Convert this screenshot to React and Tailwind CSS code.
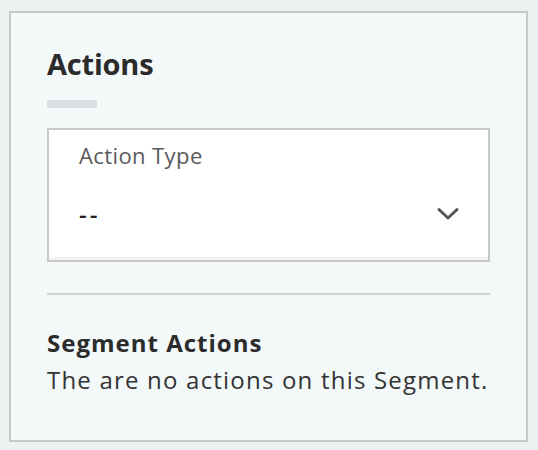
import React from 'react';

const font = { fontFamily: '"Open Sans", "Liberation Sans", sans-serif' };

const Chevron = () => (
  <svg width="22" height="14" viewBox="0 0 22 14" fill="none">
    <path d="M2 2.5 L11 11 L20 2.5" stroke="#555" strokeWidth="3" strokeLinecap="round" strokeLinejoin="round" />
  </svg>
);

export default function App() {
  return (
    <div className="h-[450px] w-[538px] bg-[#eef1f2] pt-[11px] pl-[9px]" style={font}>
      <div className="w-[519px] h-[431px] border-2 border-[#c6c8c9] bg-[#f3f8f9] px-[36px] pt-[36px]">
        {/* heading */}
        <h2 className="text-[29px] leading-none font-bold text-[#2b2b2b] tracking-[-0.2px]">Actions</h2>
        <div className="mt-[22px] h-[8px] w-[50px] bg-[#d9e0e2]"></div>

        {/* select */}
        <div className="mt-[20px] h-[134px] border-2 border-[#c8c8c8] bg-white pl-[30px] pr-[29px] pt-[14px] shadow-[inset_0_-3px_0_#f1f3f4]">
          <div className="text-[22px] leading-none text-[#5a5a5a] tracking-[0.4px]">Action Type</div>
          <div className="mt-[33px] h-[29px] flex items-center justify-between">
            <span className="text-[24px] leading-none font-semibold text-[#222] tracking-[3px]">--</span>
            <Chevron />
          </div>
        </div>

        <div className="mt-[31px] h-[2px] bg-[#cfd2d3]"></div>

        {/* segment actions */}
        <div className="mt-[36px] text-[24px] leading-none font-bold text-[#2b2b2b] tracking-[1px]">Segment Actions</div>
        <p className="mt-[13px] text-[24px] leading-none text-[#333] tracking-[1.2px]">The are no actions on this Segment.</p>
      </div>
    </div>
  );
}
